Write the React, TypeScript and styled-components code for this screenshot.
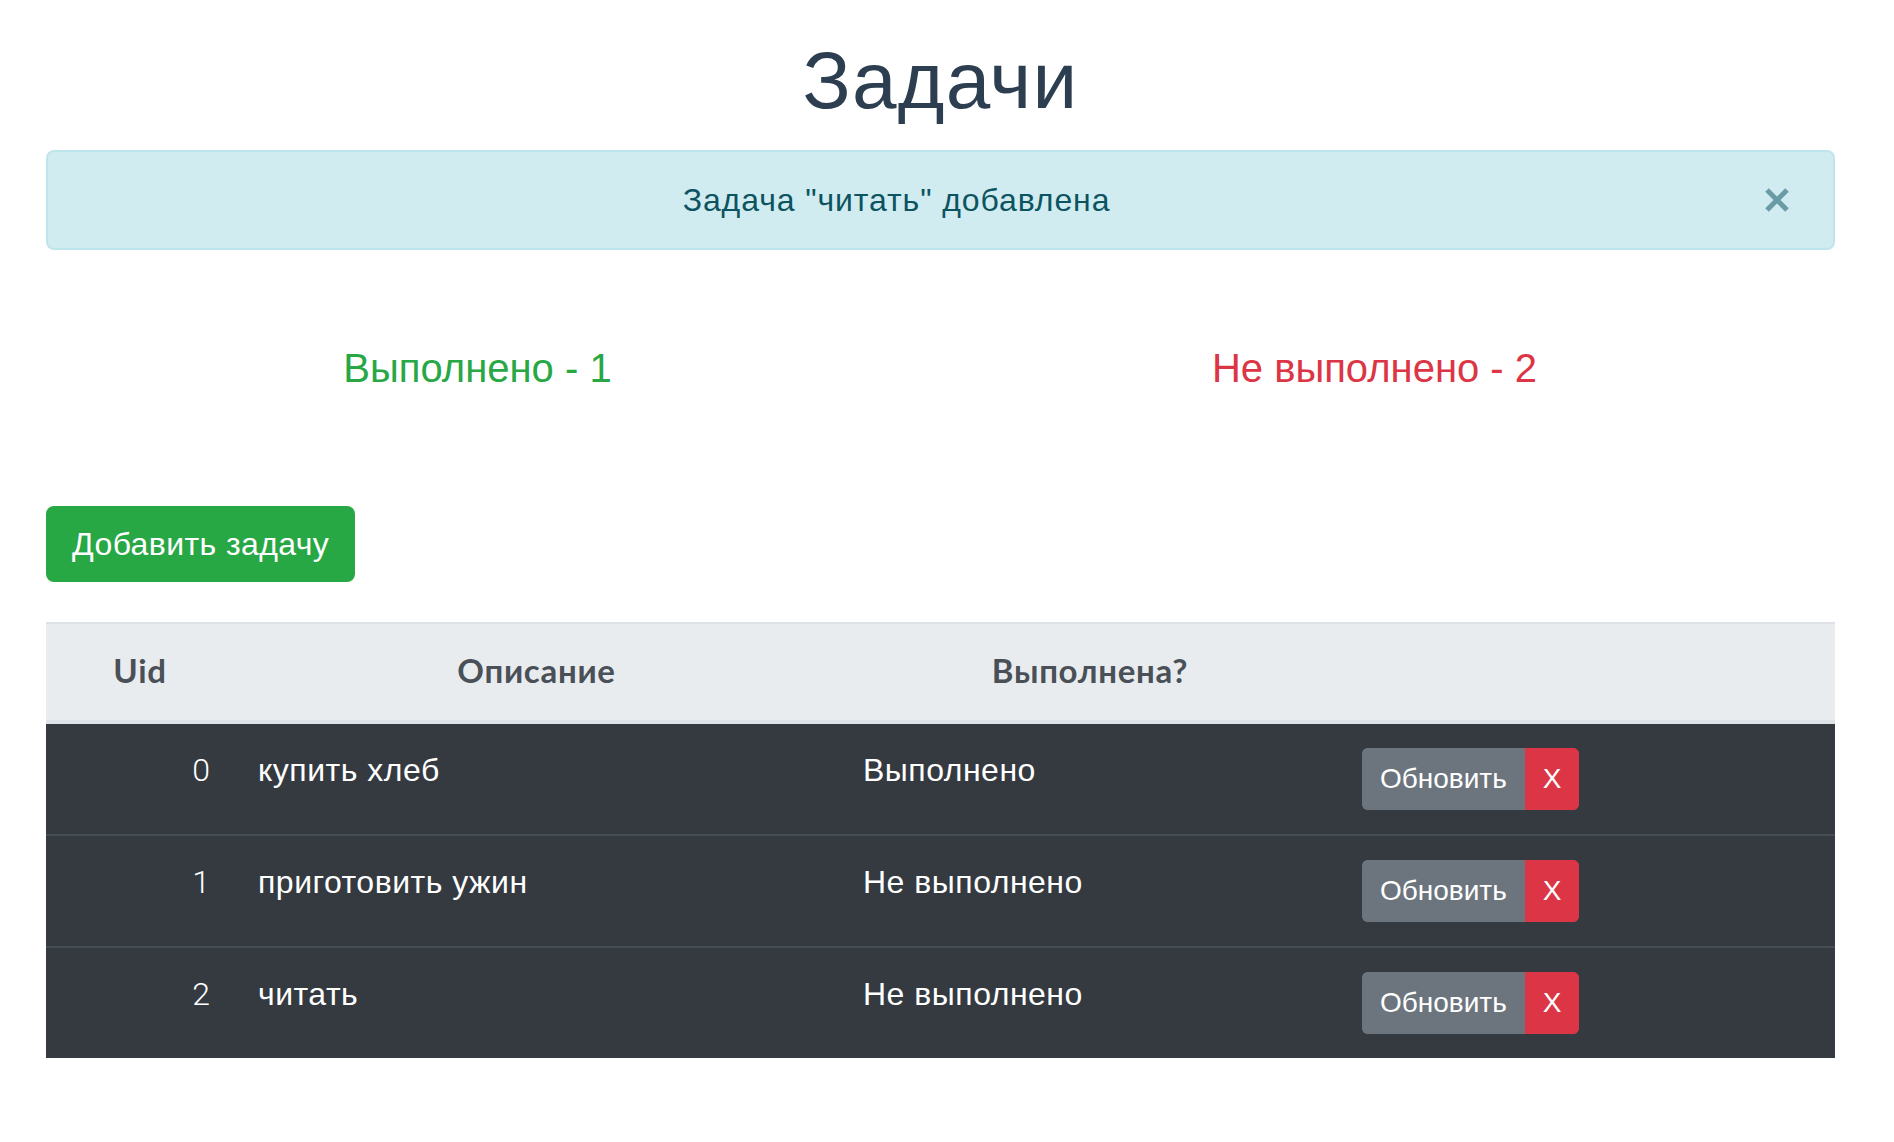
import React from "react";
import styled, { createGlobalStyle } from "styled-components";

const GlobalStyle = createGlobalStyle`
  html, body { margin: 0; padding: 0; background: #fff; }
  body {
    font-family: "Liberation Sans", Arial, Helvetica, sans-serif;
    color: #212529;
  }
  * { box-sizing: border-box; }
`;

const Page = styled.div`
  padding: 33px 0 60px 46px;
`;

const Container = styled.div`
  width: 1789px;
  display: flex;
  flex-direction: column;
`;

const Title = styled.h1`
  margin: 0 0 21px;
  font-size: 80px;
  line-height: 96px;
  font-weight: 400;
  color: #2c3e50;
  text-align: center;
  letter-spacing: 1.2px;
`;

const Alert = styled.div`
  position: relative;
  height: 100px;
  padding: 24px 128px 24px 40px;
  background: #d1ecf1;
  border: 2px solid #bee5eb;
  border-radius: 8px;
  color: #0c5460;
  font-size: 32px;
  line-height: 48px;
  text-align: center;
  letter-spacing: 0.9px;
`;

const CloseButton = styled.button`
  position: absolute;
  top: 0;
  right: 0;
  height: 96px;
  width: 112px;
  padding: 0;
  border: 0;
  background: transparent;
  display: flex;
  align-items: center;
  justify-content: center;
  cursor: pointer;
`;

const StatsRow = styled.div`
  margin: 94px 12px 0 -17px;
  display: grid;
  grid-template-columns: 1fr 1fr;
`;

const Stat = styled.h5<{ $tone: "success" | "danger" }>`
  margin: 0;
  font-size: 40px;
  line-height: 48px;
  font-weight: 400;
  text-align: center;
  color: ${(p) => (p.$tone === "success" ? "#28a745" : "#dc3545")};
`;

const Toolbar = styled.div`
  margin-top: 114px;
  display: flex;
`;

const AddButton = styled.button`
  height: 76px;
  padding: 12px 24px;
  border: 2px solid #28a745;
  border-radius: 8px;
  background: #28a745;
  color: #fff;
  font-family: "Liberation Sans", Arial, sans-serif;
  font-size: 32px;
  line-height: 48px;
  letter-spacing: 0.4px;
  cursor: pointer;
`;

const Table = styled.div`
  margin-top: 40px;
  display: flex;
  flex-direction: column;
`;

const columns = "188px 605px 499px 1fr";

const HeadRow = styled.div`
  display: grid;
  grid-template-columns: ${columns};
  background: #e9ecef;
  border-top: 2px solid #dee2e6;
  border-bottom: 4px solid #dee2e6;
`;

const HeadCell = styled.div<{ $shift?: number }>`
  padding: 22px 0 26px ${(p) => p.$shift ?? 0}px;
  font-family: Lato, "Open Sans", sans-serif;
  font-weight: 700;
  font-size: 33px;
  line-height: 48px;
  color: #495057;
  text-align: center;
  letter-spacing: 0.7px;
`;

const BodyRow = styled.div<{ $first?: boolean }>`
  display: grid;
  grid-template-columns: ${columns};
  align-items: start;
  padding: 24px 0;
  background: #343a40;
  border-top: ${(p) => (p.$first ? "0" : "2px solid #454d55")};
  color: #fff;
  font-size: 32px;
  line-height: 48px;
`;

const NumCell = styled.div`
  margin-top: -2px;
  padding-right: 24px;
  text-align: right;
  font-family: Roboto, "Liberation Sans", sans-serif;
  font-weight: 300;
`;

const TextCell = styled.div`
  margin-top: -2px;
  padding-left: 24px;
  letter-spacing: 0.5px;
`;

const ActionsCell = styled.div`
  padding-left: 24px;
  display: flex;
`;

const BtnGroup = styled.div`
  display: inline-flex;
  border-radius: 6px;
  overflow: hidden;
`;

const SmallButton = styled.button<{ $variant: "secondary" | "danger" }>`
  height: 62px;
  padding: 8px 16px;
  border: 2px solid ${(p) => (p.$variant === "secondary" ? "#6c757d" : "#dc3545")};
  background: ${(p) => (p.$variant === "secondary" ? "#6c757d" : "#dc3545")};
  color: #fff;
  font-family: "Liberation Sans", Arial, sans-serif;
  font-size: 28px;
  line-height: 42px;
  cursor: pointer;
`;

const tasks = [
  { uid: 0, text: "купить хлеб", done: true },
  { uid: 1, text: "приготовить ужин", done: false },
  { uid: 2, text: "читать", done: false },
];

export default function App() {
  const doneCount = tasks.filter((t) => t.done).length;
  return (
    <>
      <GlobalStyle />
      <Page>
        <Container>
          <Title>Задачи</Title>
          <Alert>
            Задача "читать" добавлена
            <CloseButton aria-label="Close">
              <svg width="26" height="26" viewBox="0 0 26 26">
                <path
                  d="M3 3 L23 23 M23 3 L3 23"
                  stroke="#6a9ca5"
                  strokeWidth="5"
                  strokeLinecap="butt"
                />
              </svg>
            </CloseButton>
          </Alert>
          <StatsRow>
            <Stat $tone="success">Выполнено - {doneCount}</Stat>
            <Stat $tone="danger">Не выполнено - {tasks.length - doneCount}</Stat>
          </StatsRow>
          <Toolbar>
            <AddButton>Добавить задачу</AddButton>
          </Toolbar>
          <Table>
            <HeadRow>
              <HeadCell>Uid</HeadCell>
              <HeadCell>Описание</HeadCell>
              <HeadCell $shift={3}>Выполнена?</HeadCell>
              <HeadCell />
            </HeadRow>
            {tasks.map((t, i) => (
              <BodyRow key={t.uid} $first={i === 0}>
                <NumCell>{t.uid}</NumCell>
                <TextCell>{t.text}</TextCell>
                <TextCell>{t.done ? "Выполнено" : "Не выполнено"}</TextCell>
                <ActionsCell>
                  <BtnGroup>
                    <SmallButton $variant="secondary">Обновить</SmallButton>
                    <SmallButton $variant="danger">X</SmallButton>
                  </BtnGroup>
                </ActionsCell>
              </BodyRow>
            ))}
          </Table>
        </Container>
      </Page>
    </>
  );
}
